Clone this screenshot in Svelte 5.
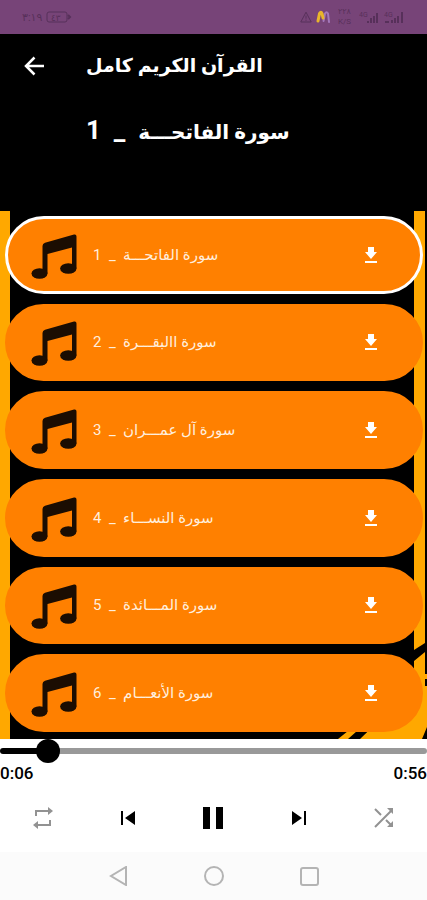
<script>
  const tracks = [
    "سورة الفاتحـــة",
    "سورة االبقـــرة",
    "سورة آل عمـــران",
    "سورة النســـاء",
    "سورة المـــائدة",
    "سورة الأنعـــام",
  ];
  const duration = 56;

  let current = $state(0);
  let position = $state(5);
  let fill = $derived((position / duration) * 100);
</script>

<div class="app">
  <div class="status">
    <span class="status__time">٣:١٩</span>
    <svg class="status__battery" width="26" height="12" viewBox="0 0 26 12">
      <rect x="1" y="1" width="20" height="10" rx="2" fill="none" stroke="currentColor" />
      <path d="M22 4l2 2-2 2" fill="none" stroke="currentColor" stroke-width="2" />
      <text x="5" y="10" font-size="9" fill="currentColor">٤٣</text>
    </svg>
    <svg width="12" height="12" viewBox="0 0 12 12" fill="none" stroke="currentColor">
      <path d="M6 1.2L11.2 11H.8zM6 4.5v3.2M6 8.6v1.2" />
    </svg>
    <svg width="14" height="14" viewBox="0 0 14 14" fill="none" stroke-linecap="round">
      <path d="M7.500 11L9 3.500Q10.500 1 12 3.500L13 12" stroke="#a478bb" stroke-width="2" />
      <path d="M2 11L3.500 3.500Q5 1 6 3.500L7 8" stroke="#e9b52c" stroke-width="3" />
    </svg>
    <span class="status__speed">٢٢٨<br />K/S</span>
    <svg class="status__signal" width="20" height="14" viewBox="0 0 20 14">
      <path d="M8 11h2v2H8zM11 8h2v5h-2zM14 6h2v7h-2zM17 3h2v10h-2z" fill="currentColor" />
      <text x="0" y="7" font-size="7" fill="currentColor">4G</text>
    </svg>
    <svg width="22" height="14" viewBox="0 0 22 14">
      <path d="M2 11h4v2H2zM8 10h2v3H8zM11 8h2v5h-2zM14 6h2v7h-2zM18 2h2v11h-2z" fill="currentColor" />
      <text x="1" y="7" font-size="7" fill="currentColor">4G</text>
    </svg>
  </div>

  <header class="header">
    <div class="header__bar">
      <button class="header__back" aria-label="رجوع">
        <svg width="24" height="24" viewBox="0 0 24 24" fill="none" stroke="currentColor" stroke-width="2.5">
          <path d="M22 12H4M12.5 3.500L4 12l8.500 8.500" />
        </svg>
      </button>
      <h1 dir="rtl">القرآن الكريم كامل</h1>
    </div>
    <h2 dir="rtl">{tracks[current]}<span class="header__number">&nbsp; _ &nbsp;{current + 1}</span></h2>
  </header>

  <main class="list">
    <svg class="list__corner" width="92" height="100" viewBox="0 0 92 100">
      <path d="M79 0h11v4L79 11z" fill="#ffa800" />
      <path d="M79 22L90 13v22h2v5h-2v7h2v41l-5 12H25L79 48z" fill="#ffa800" />
      <path d="M3 100l10-8h9l-9 8z" fill="#ffa800" />
    </svg>
    {#each tracks as track, i}
      <div class={`track ${i === current ? "track--active" : ""}`}>
        <button class="track__play" onclick={() => (current = i)}>
          <svg width="46" height="48" viewBox="0 0 46 48" fill="#1b0d02">
            <path d="M11.5 15Q11.5 12.5 14 11.800L43 3.500Q45.500 3 45.500 5.500V37.500H41V16.500L16.500 23V42.500h-5z" />
            <ellipse cx="8.5" cy="42.5" rx="8" ry="5.300" />
            <ellipse cx="37.3" cy="37.5" rx="8.200" ry="5.300" />
          </svg>
          <span dir="rtl">{track}&nbsp; _ &nbsp;{i + 1}</span>
        </button>
        <button class="track__download" aria-label="تحميل">
          <svg width="14" height="18" viewBox="0 0 14 18" fill="currentColor">
            <path d="M4 1h6v5h3l-6 7-6-7h3zM1 15h12v2H1z" />
          </svg>
        </button>
      </div>
    {/each}
  </main>

  <section class="player">
    <input
      type="range"
      min="0"
      max={duration}
      bind:value={position}
      aria-label="الموضع"
      style={`--fill: ${fill}%`}
    />
    <div class="player__times">
      <span>0:06</span>
      <span>0:56</span>
    </div>
    <div class="player__controls">
      <button class="muted" aria-label="تكرار">
        <svg width="24" height="24" viewBox="0 0 24 24" fill="currentColor">
          <path d="M4 4h13V1l5 4-5 4V6H6v4H4zM20 20H7v3l-5-4 5-4v3h11v-4h2z" />
        </svg>
      </button>
      <button aria-label="السابق">
        <svg width="16" height="16" viewBox="0 0 16 16" fill="currentColor">
          <path d="M1 1h2v14H1zM15 1v14L5 8z" />
        </svg>
      </button>
      <button aria-label="إيقاف مؤقت">
        <svg width="20" height="24" viewBox="0 0 20 24" fill="currentColor">
          <path d="M0 1h7v22H0zM13 1h7v22h-7z" />
        </svg>
      </button>
      <button aria-label="التالي">
        <svg width="16" height="16" viewBox="0 0 16 16" fill="currentColor">
          <path d="M13 1h2v14h-2zM1 1v14l10-7z" />
        </svg>
      </button>
      <button class="muted" aria-label="عشوائي">
        <svg width="20" height="20" viewBox="0 0 20 20" fill="none" stroke="currentColor" stroke-width="2">
          <path d="M1 19L18 2M1 1l6 6M12 12l6 6" />
          <path d="M13 0h6v6zM19 13v6h-6z" fill="currentColor" stroke="none" />
        </svg>
      </button>
    </div>
  </section>

  <nav class="nav">
    <button aria-label="رجوع">
      <svg width="20" height="20" viewBox="0 0 20 20"><path d="M17 1v18L2 10z" /></svg>
    </button>
    <button aria-label="الرئيسية">
      <svg width="20" height="20" viewBox="0 0 20 20"><circle cx="10" cy="10" r="9" /></svg>
    </button>
    <button aria-label="التطبيقات">
      <svg width="20" height="20" viewBox="0 0 20 20"><rect x="2" y="2" width="17" height="17" rx="2" /></svg>
    </button>
  </nav>
</div>

<style>
  :global(body) {
    margin: 0;
    background: #fff;
  }

  .app {
    display: flex;
    flex-direction: column;
    min-height: 100vh;
    font-family: Roboto, "DejaVu Sans", sans-serif;
  }

  svg {
    display: block;
    flex: none;
  }

  button {
    display: flex;
    align-items: center;
    justify-content: center;
    margin: 0;
    padding: 0;
    border: 0;
    background: none;
    color: inherit;
    font: inherit;
    cursor: pointer;
  }

  .status {
    display: flex;
    align-items: center;
    gap: 4px;
    height: 34px;
    padding: 0 22px;
    background: #774478;
    color: #57305a;
    font-size: 11px;
  }

  .status__battery {
    margin-right: auto;
  }

  .status__speed {
    margin: 0 4px;
    font-size: 8px;
    line-height: 10px;
    text-align: center;
  }

  .header {
    height: 177px;
    background: #000;
    color: #fff;
  }

  .header__bar {
    display: flex;
    align-items: center;
    gap: 40px;
    height: 64px;
    padding-left: 22px;
  }

  h1,
  h2 {
    margin: 0;
    font-weight: 700;
    line-height: 32px;
    white-space: nowrap;
  }

  h1 {
    font-size: 19px;
  }

  h2 {
    width: max-content;
    padding: 16px 0 0 86px;
    font-size: 20px;
  }

  .header__number {
    font-size: 26px;
  }

  .list {
    position: relative;
    display: grid;
    grid-auto-rows: 1fr;
    gap: 10px;
    flex: 1;
    padding: 5px 4px 7px 5px;
    background: #000;
  }

  .list::before,
  .list::after {
    content: "";
    position: absolute;
    top: 0;
    bottom: 0;
    width: 10px;
    background: #ffa800;
  }

  .list::before {
    left: 0;
  }

  .list::after {
    right: 2px;
    bottom: 98px;
    width: 11px;
  }

  .list__corner {
    position: absolute;
    right: 0;
    bottom: 0;
  }

  .track {
    position: relative;
    z-index: 1;
    display: flex;
    box-sizing: border-box;
    min-height: 76px;
    border: 3px solid #ff8000;
    border-radius: 40px;
    background: #ff8000;
  }

  .track--active {
    border-color: #fff;
  }

  .track__play {
    flex: 1;
    justify-content: flex-start;
    gap: 16px;
    padding-left: 23px;
    color: #ffeedd;
    font-size: 15px;
    white-space: nowrap;
  }

  .track__download {
    width: 48px;
    margin-right: 25px;
    color: #fff;
  }

  .player {
    background: #fff;
    color: #000;
  }

  input {
    display: block;
    width: 100%;
    height: 24px;
    margin: 0;
    appearance: none;
    background: none;
  }

  input::-webkit-slider-runnable-track {
    height: 6px;
    border-radius: 3px;
    background: linear-gradient(to right, #000 var(--fill), #999 var(--fill));
  }

  input::-webkit-slider-thumb {
    width: 24px;
    height: 24px;
    margin-top: -9px;
    appearance: none;
    border-radius: 50%;
    background: #000;
  }

  .player__times {
    display: flex;
    justify-content: space-between;
    font-size: 17px;
    font-weight: 500;
    line-height: 20px;
  }

  .player__controls {
    display: grid;
    grid-template-columns: repeat(5, 1fr);
    height: 69px;
  }

  .muted {
    color: #929292;
  }

  .nav {
    display: flex;
    justify-content: center;
    gap: 47px;
    height: 48px;
    background: #fbfbfb;
  }

  .nav button {
    width: 48px;
  }

  .nav svg {
    fill: none;
    stroke: #b4b4b4;
    stroke-width: 2;
  }
</style>
